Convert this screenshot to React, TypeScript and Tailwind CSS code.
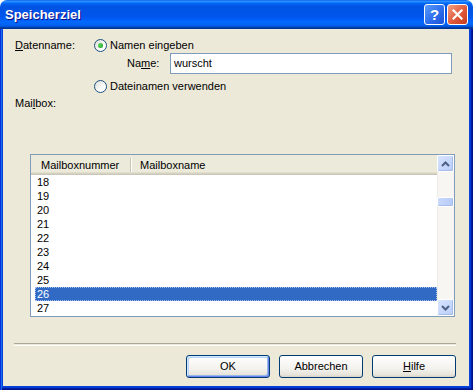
import { ReactNode } from 'react';

function Radio({ checked }: { checked?: boolean }) {
  return (
    <span className="w-[13px] h-[13px] rounded-full border border-[#1C5180] bg-[linear-gradient(135deg,#DCDCD7,#FFFFFF_70%)] flex items-center justify-center shrink-0">
      {checked && <span className="w-[5px] h-[5px] rounded-full bg-[radial-gradient(circle_at_35%_35%,#62D85E,#11A01A)]" />}
    </span>
  );
}

function XpButton({ children, isDefault }: { children: ReactNode; isDefault?: boolean }) {
  return (
    <button
      className={
        isDefault
          ? 'w-[84px] h-[23px] rounded-[3px] border border-[#003C74] bg-[linear-gradient(180deg,#FFFFFF,#F3F2EE_60%,#E6E3DA_90%,#D6D0C5)] text-[11px] text-black shadow-[inset_-1px_-1px_#6982EE,inset_1px_1px_#CEE7FF,inset_-2px_-2px_#98B8EA,inset_2px_2px_#BCD4F6]'
          : 'w-[84px] h-[23px] rounded-[3px] border border-[#003C74] bg-[linear-gradient(180deg,#FFFFFF,#F3F2EE_60%,#E6E3DA_90%,#D6D0C5)] text-[11px] text-black'
      }
    >
      {children}
    </button>
  );
}

function ScrollButton({ up }: { up?: boolean }) {
  return (
    <div className="w-[17px] h-[17px] rounded-[2px] border border-white bg-[linear-gradient(135deg,#D8E4FE,#B9CDF9)] flex items-center justify-center shadow-[inset_-1px_-1px_#A8BCE9]">
      <svg width="9" height="6" viewBox="0 0 9 6">
        <path
          d={up ? 'M1 5 L4.5 1.5 L8 5' : 'M1 1 L4.5 4.5 L8 1'}
          fill="none"
          stroke="#4D6185"
          strokeWidth="2"
        />
      </svg>
    </div>
  );
}

const rows = ['18', '19', '20', '21', '22', '23', '24', '25', '26', '27'];

export default function App() {
  return (
    <div className="w-[473px] h-[390px] flex flex-col font-['Liberation_Sans',Arial,sans-serif] text-[11px] text-black bg-white">
      {/* title bar */}
      <div className="h-[29px] shrink-0 rounded-t-[7px] flex items-center pl-[5px] pr-[5px] bg-[linear-gradient(180deg,#0058EE_0%,#3593FF_4%,#288EFF_6%,#127DFF_8%,#036FFC_10%,#0262EE_14%,#0057E5_20%,#0054E3_24%,#0055EB_56%,#005BF5_66%,#026AFE_76%,#0062EF_86%,#0052D6_92%,#0040AB_94%,#003092_100%)]">
        <span className="flex-1 text-white font-bold text-[13px] [text-shadow:1px_1px_#0F1089] pt-[1px]">
          Speicherziel
        </span>
        <div className="flex gap-[2px]">
          <div className="w-[21px] h-[21px] rounded-[3px] border border-white bg-[linear-gradient(135deg,#5A9BFB,#2A6AEB_60%,#1B52D6)] flex items-center justify-center text-white font-bold text-[15px] leading-none">
            ?
          </div>
          <div className="w-[21px] h-[21px] rounded-[3px] border border-white bg-[linear-gradient(135deg,#F2A183,#E0593A_55%,#C53D1E)] flex items-center justify-center">
            <svg width="11" height="11" viewBox="0 0 11 11">
              <path d="M1.5 1.5 L9.5 9.5 M9.5 1.5 L1.5 9.5" stroke="white" strokeWidth="2.2" strokeLinecap="square" />
            </svg>
          </div>
        </div>
      </div>

      {/* frame + body */}
      <div className="flex-1 flex px-[3px] pb-[4px] pr-[4px] bg-[#0842D5] shadow-[inset_1px_0_#0831D9,inset_2px_0_#166AEE,inset_-1px_-1px_#00138C,inset_-2px_-2px_#001EA0,inset_-3px_-3px_#003BDA]">
        <div className="flex-1 bg-[#ECE9D8] flex flex-col pl-[12px] pt-[9px]">
          <div className="flex items-center h-[14px]">
            <span className="w-[79px]">
              <span className="underline">D</span>atenname:
            </span>
            <Radio checked />
            <span className="ml-[3px]">Namen eingeben</span>
          </div>

          <div className="flex items-center mt-[1px] ml-[112px]">
            <span className="w-[43px]">
              Na<span className="underline">m</span>e:
            </span>
            <div className="w-[282px] h-[21px] border border-[#7F9DB9] bg-white flex items-center pl-[3px]">
              wurscht
            </div>
          </div>

          <div className="flex items-center h-[14px] mt-[5px] ml-[79px]">
            <Radio />
            <span className="ml-[3px]">Dateinamen verwenden</span>
          </div>

          <div className="h-[14px] mt-[3px] flex items-center">
            <span>
              Mai<span className="underline">l</span>box:
            </span>
          </div>

          {/* list view */}
          <div className="mt-[44px] ml-[15px] w-[425px] h-[163px] border border-[#7F9DB9] bg-white flex">
            <div className="flex-1 flex flex-col overflow-hidden">
              <div className="h-[20px] shrink-0 flex items-center bg-[#EBEADB] shadow-[inset_0_-1px_#CBC7B8,inset_0_-2px_#D6D2C2,inset_0_-3px_#E2DECD]">
                <span className="w-[99px] pl-[10px]">Mailboxnummer</span>
                <span className="w-[1px] h-[14px] bg-[#C7C5B2] shadow-[1px_0_#FFFFFF]" />
                <span className="pl-[9px]">Mailboxname</span>
              </div>
              {rows.map((r) => (
                <div
                  key={r}
                  className={
                    r === '26'
                      ? 'h-[14px] shrink-0 ml-[4px] pl-[2px] flex items-center bg-[#316AC5] text-white outline-1 outline-dotted outline-[#A8BFE6] -outline-offset-1'
                      : 'h-[14px] shrink-0 ml-[4px] pl-[2px] flex items-center'
                  }
                >
                  {r}
                </div>
              ))}
            </div>
            <div className="w-[17px] flex flex-col bg-[#F7F6F2] shadow-[inset_1px_0_#EEEDE5]">
              <ScrollButton up />
              <div className="mt-[25px] h-[10px] rounded-[2px] border border-white bg-[linear-gradient(90deg,#C9D8FC,#B6CBF7)] shadow-[inset_-1px_-1px_#A8BCE9]" />
              <div className="flex-1" />
              <ScrollButton />
            </div>
          </div>

          {/* separator */}
          <div className="mt-[26px] -ml-[1px] w-[442px] h-[2px] border-t border-[#ACA899] shadow-[0_1px_#FFFFFF]" />

          {/* buttons */}
          <div className="mt-[10px] w-[441px] flex justify-end gap-[9px]">
            <XpButton isDefault>OK</XpButton>
            <XpButton>Abbrechen</XpButton>
            <XpButton>
              <span className="underline">H</span>ilfe
            </XpButton>
          </div>
        </div>
      </div>
    </div>
  );
}
